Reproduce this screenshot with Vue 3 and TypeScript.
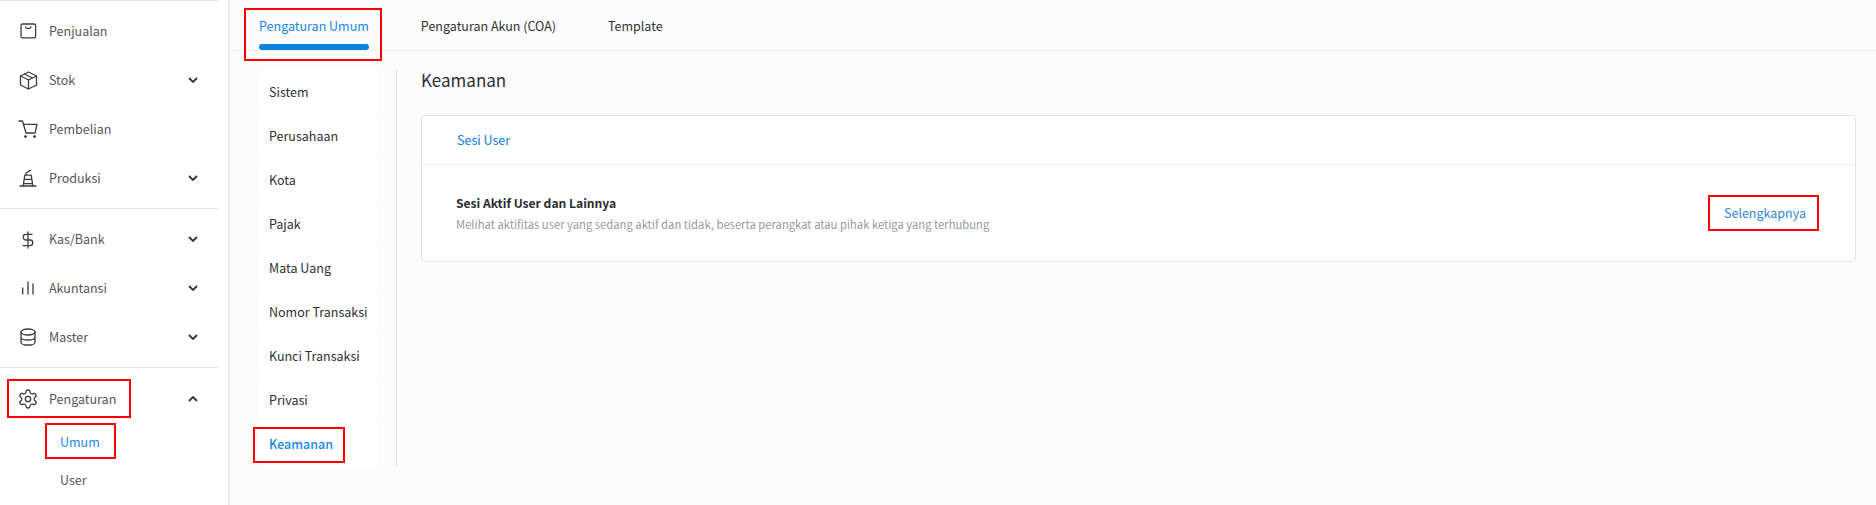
<script setup lang="ts">
interface NavItem { label: string; icon: string; chevron?: 'down' | 'up' }
const groups: NavItem[][] = [
  [
    { label: 'Penjualan', icon: 'bag' },
    { label: 'Stok', icon: 'box', chevron: 'down' },
    { label: 'Pembelian', icon: 'cart' },
    { label: 'Produksi', icon: 'tower', chevron: 'down' },
  ],
  [
    { label: 'Kas/Bank', icon: 'dollar', chevron: 'down' },
    { label: 'Akuntansi', icon: 'bars', chevron: 'down' },
    { label: 'Master', icon: 'db', chevron: 'down' },
  ],
  [{ label: 'Pengaturan', icon: 'gear', chevron: 'up' }],
]
const menu = ['Sistem', 'Perusahaan', 'Kota', 'Pajak', 'Mata Uang', 'Nomor Transaksi', 'Kunci Transaksi', 'Privasi', 'Keamanan']
</script>

<template>
  <div class="page">
    <aside class="sidebar">
      <div v-for="(group, gi) in groups" :key="gi" class="group" :class="{ open: gi === 2 }">
        <div v-for="item in group" :key="item.label" class="nav-item">
          <span v-if="item.icon === 'gear'" class="mark mark-settings"></span>
          <svg class="icon" viewBox="0 0 20 20" fill="none" stroke="currentColor" stroke-width="1.3" stroke-linecap="round" stroke-linejoin="round">
            <template v-if="item.icon === 'bag'">
              <rect x="3" y="3" width="14.6" height="13.8" rx="1.6" />
              <path d="M7.6 5.8 C8.2 8.2 12.4 8.2 13 5.8" />
            </template>
            <template v-else-if="item.icon === 'box'">
              <path d="M10.5 2 L18.5 6 V15 L10.5 19 L2.5 15 V6 Z" />
              <path d="M2.5 6 L10.5 10 L18.5 6 M10.5 10 V19 M6.5 4 L14.5 8" />
            </template>
            <template v-else-if="item.icon === 'cart'">
              <path d="M1 2 H4.5 L8 14 H17 M5.4 5.4 H19 L17 14" />
              <circle cx="7.5" cy="17.6" r="0.8" fill="currentColor" />
              <circle cx="16.5" cy="17.6" r="0.8" fill="currentColor" />
            </template>
            <template v-else-if="item.icon === 'tower'">
              <path d="M2 18 H18 M5.5 18 V15.6 L6.8 7.2 H13.2 L14.5 15.6 V18 M5.5 15.6 H14.5 M6.2 11.4 H13.8 M8 7 V5 L12.4 2.4" />
            </template>
            <template v-else-if="item.icon === 'dollar'">
              <g transform="translate(0.4 1.4) scale(0.8)" stroke-width="1.6">
                <path d="M12 2 V22 M17 5 H9.5 a3.5 3.5 0 0 0 0 7 h5 a3.5 3.5 0 0 1 0 7 H6" />
              </g>
            </template>
            <template v-else-if="item.icon === 'bars'">
              <path d="M4.7 10 V16 M10 4 V16 M15 6 V16" />
            </template>
            <template v-else-if="item.icon === 'db'">
              <ellipse cx="10" cy="5" rx="7" ry="3" />
              <path d="M3 5 V15 C3 16.6 5 18 7 18 H13 C15 18 17 16.6 17 15 V5 M3 10.5 C3 12 6 13 10 13 C14 13 17 12 17 10.5" />
            </template>
            <template v-else>
              <g transform="translate(-0.8 -0.8) scale(0.9)" stroke-width="1.45">
                <path d="M12.22 2h-.44a2 2 0 0 0-2 2v.18a2 2 0 0 1-1 1.73l-.43.25a2 2 0 0 1-2 0l-.15-.08a2 2 0 0 0-2.73.73l-.22.38a2 2 0 0 0 .73 2.73l.15.1a2 2 0 0 1 1 1.72v.51a2 2 0 0 1-1 1.74l-.15.09a2 2 0 0 0-.73 2.73l.22.38a2 2 0 0 0 2.73.73l.15-.08a2 2 0 0 1 2 0l.43.25a2 2 0 0 1 1 1.73V20a2 2 0 0 0 2 2h.44a2 2 0 0 0 2-2v-.18a2 2 0 0 1 1-1.73l.43-.25a2 2 0 0 1 2 0l.15.08a2 2 0 0 0 2.73-.73l.22-.39a2 2 0 0 0-.73-2.73l-.15-.08a2 2 0 0 1-1-1.74v-.5a2 2 0 0 1 1-1.74l.15-.09a2 2 0 0 0 .73-2.73l-.22-.38a2 2 0 0 0-2.73-.73l-.15.08a2 2 0 0 1-2 0l-.43-.25a2 2 0 0 1-1-1.73V4a2 2 0 0 0-2-2z" />
                <circle cx="12" cy="12" r="3" />
              </g>
            </template>
          </svg>
          <span class="nav-label">{{ item.label }}</span>
          <svg v-if="item.chevron" class="chev" :class="{ up: item.chevron === 'up' }" viewBox="0 0 10 6" fill="none" stroke="currentColor" stroke-width="1.8">
            <path d="M1 1 L5 5 L9 1" />
          </svg>
        </div>
      </div>
      <div class="subs">
        <div class="sub-item active">
          <span class="mark mark-umum"></span>Umum
        </div>
        <div class="sub-item">User</div>
      </div>
    </aside>

    <main class="main">
      <nav class="tabs">
        <div class="tab active">
          Pengaturan Umum
          <span class="mark mark-tab"></span>
        </div>
        <div class="tab">Pengaturan Akun (COA)</div>
        <div class="tab">Template</div>
      </nav>

      <div class="body">
        <div class="side-menu">
          <div v-for="m in menu" :key="m" class="menu-item" :class="{ active: m === 'Keamanan' }">
            {{ m }}
            <span v-if="m === 'Keamanan'" class="mark mark-menu"></span>
          </div>
        </div>
        <div class="rule"></div>
        <section class="content">
          <h1 class="title">Keamanan</h1>
          <div class="card">
            <div class="card-head">Sesi User</div>
            <div class="card-row">
              <div class="row-text">
                <div class="row-title">Sesi Aktif User dan Lainnya</div>
                <div class="row-sub">Melihat aktifitas user yang sedang aktif dan tidak, beserta perangkat atau pihak ketiga yang terhubung</div>
              </div>
              <div class="more">
                Selengkapnya
                <span class="mark mark-more"></span>
              </div>
            </div>
          </div>
        </section>
      </div>
    </main>
  </div>
</template>

<style>
html, body { margin: 0; background: #fcfcfc; }
</style>

<style scoped>
.page {
  display: flex;
  width: 1876px;
  height: 505px;
  overflow: hidden;
  background: #fcfcfc;
  font-family: "Noto Sans CJK SC", "Noto Sans", sans-serif;
  font-size: 12.5px;
  line-height: 20px;
  color: #2f2f33;
}
.sidebar {
  width: 228px;
  flex: none;
  background: #fff;
  border-right: 2px solid #e9eef5;
}
.group {
  width: 218px;
  border-top: 1px solid #dfe9f5;
  padding: 5px 0 6px;
}
.group.open { padding: 11px 0 0; }
.nav-item {
  position: relative;
  height: 49px;
  display: flex;
  align-items: center;
  color: #56565a;
}
.group.open .nav-item { height: 39px; }
.icon {
  width: 20px;
  height: 20px;
  flex: none;
  margin-left: 18px;
  color: #3c3c40;
}
.nav-label { margin-left: 11px; flex: 1; }
.chev {
  width: 10px;
  height: 6px;
  margin-right: 20px;
  color: #333;
}
.chev.up { transform: rotate(180deg); }
.subs { padding-top: 5px; }
.sub-item {
  position: relative;
  height: 38px;
  display: flex;
  align-items: center;
  padding-left: 60px;
  color: #56565a;
}
.sub-item.active { color: #1b87e6; }
.main { flex: 1; min-width: 0; }
.tabs {
  display: flex;
  height: 50px;
  box-sizing: content-box;
  border-bottom: 1px solid #eeeeee;
  padding-left: 29px;
  gap: 52px;
}
.tab {
  position: relative;
  height: 50px;
  padding-top: 16px;
  box-sizing: border-box;
  color: #333;
}
.tab.active { color: #1b87e6; }
.tab.active::after {
  content: "";
  position: absolute;
  left: 0;
  right: 0;
  bottom: 0;
  height: 6px;
  border-radius: 3px;
  background: #0b82e0;
}
.body {
  display: flex;
  padding: 19px 20px 0 29px;
  align-items: flex-start;
}
.side-menu { width: 119px; flex: none; }
.menu-item {
  position: relative;
  height: 44px;
  display: flex;
  align-items: center;
  padding-left: 10px;
  background: #fff;
  border-radius: 6px;
  color: #2f2f33;
  white-space: nowrap;
}
.menu-item.active { color: #1b87e6; font-weight: 500; }
.rule {
  width: 1px;
  height: 396px;
  flex: none;
  margin-left: 18px;
  background: #dcdcdc;
}
.content { flex: 1; min-width: 0; margin-left: 24px; }
.title {
  margin: -2px 0 0;
  font-size: 17px;
  font-weight: 400;
  line-height: 24px;
  color: #2f2f33;
}
.card {
  margin-top: 23px;
  height: 147px;
  box-sizing: border-box;
  background: #fff;
  border: 1px solid #e6e6e6;
  border-radius: 4px;
}
.card-head {
  height: 49px;
  box-sizing: border-box;
  padding: 14px 0 0 35px;
  border-bottom: 1px solid #ececec;
  color: #0b7fd8;
}
.card-row {
  display: flex;
  align-items: center;
  height: 96px;
  padding: 0 49px 0 34px;
}
.row-text { flex: 1; }
.row-title { font-size: 12.1px; font-weight: 700; color: #2b2b2f; line-height: 20px; }
.row-sub { margin-top: 1px; font-size: 11.25px; line-height: 20px; color: #9a9a9a; }
.more { position: relative; color: #2f88d8; }
.mark {
  position: absolute;
  box-sizing: border-box;
  border: 2px solid #f00;
  pointer-events: none;
}
.mark-settings { left: 7px; width: 124px; top: 0; bottom: 0; }
.mark-umum { left: 45px; width: 71px; top: 0; height: 36px; }
.mark-tab { left: -15px; right: -13px; top: 8px; height: 53px; }
.mark-menu { left: -6px; width: 92px; top: 5px; height: 36px; }
.mark-more { left: -16px; right: -13px; top: -8px; height: 36px; }
</style>
